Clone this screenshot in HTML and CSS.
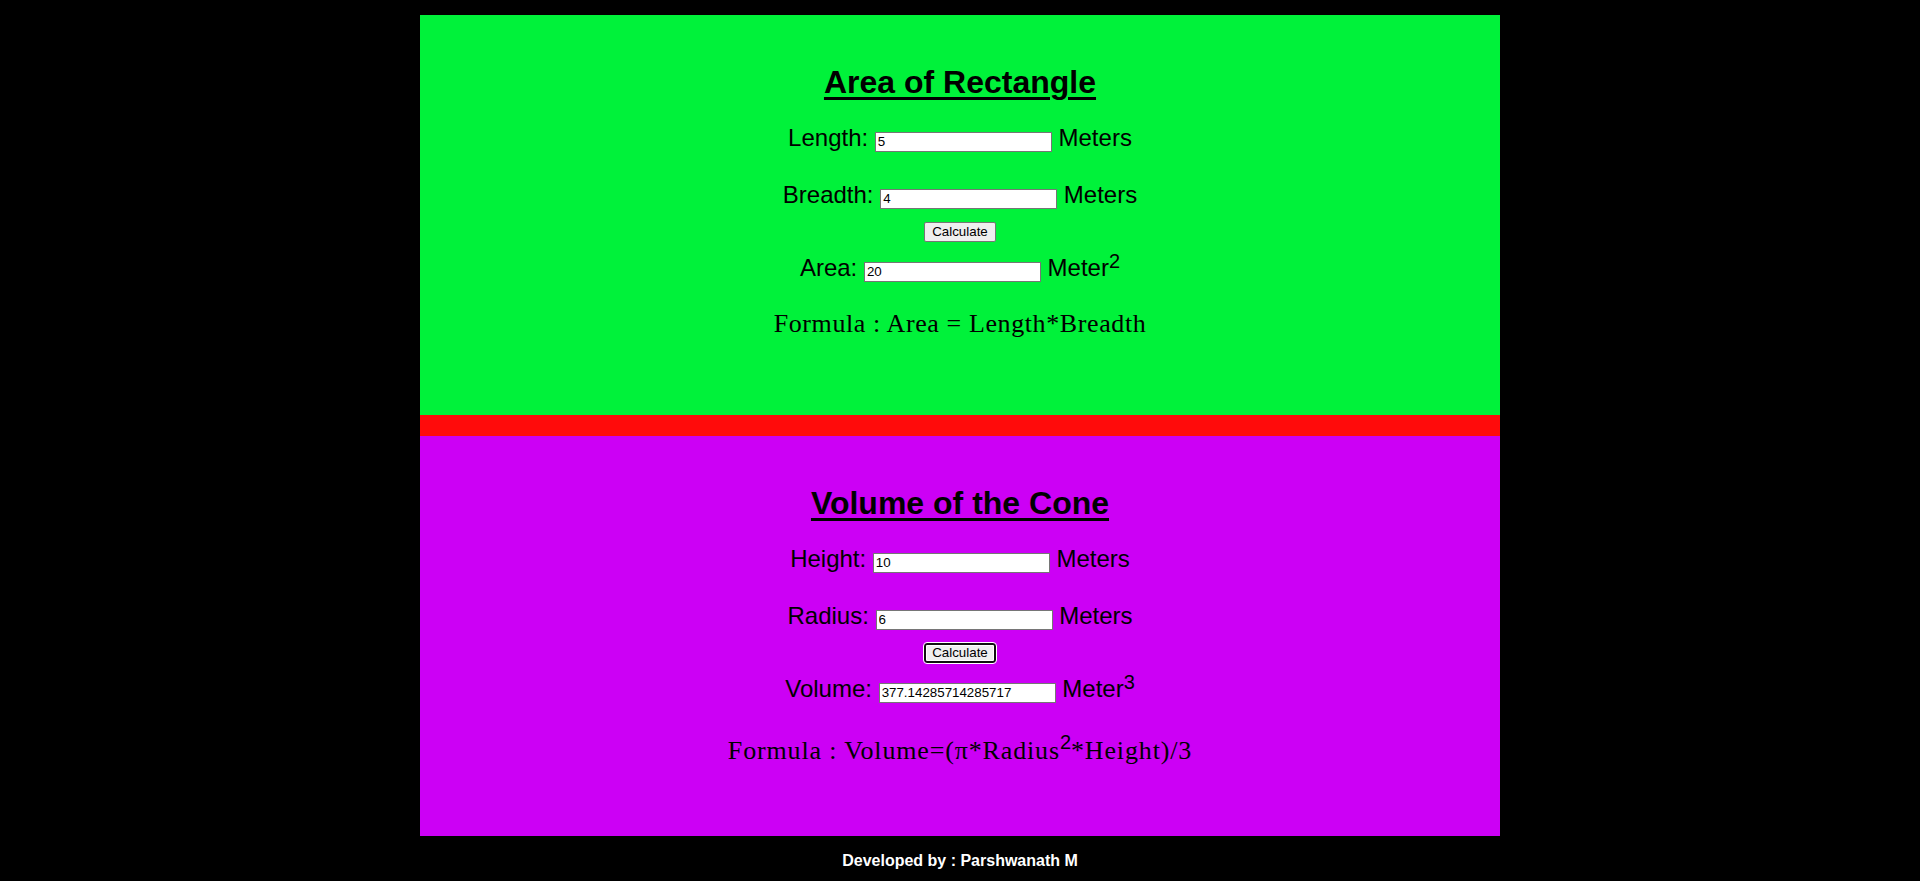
FILE: index.html
```html
<!DOCTYPE html>
<html lang="en">
<head>
<meta charset="utf-8">
<title>Area and Volume Calculator</title>
<link rel="stylesheet" href="styles.css">
</head>
<body>
<main class="page">
  <section class="panel panel-rect">
    <h1 class="title">Area of Rectangle</h1>
    <p class="row row-first">Length: <input class="field" type="text" value="5"> Meters</p>
    <p class="row row-second">Breadth: <input class="field" type="text" value="4"> Meters</p>
    <button class="btn" type="button">Calculate</button>
    <p class="row row-result">Area: <input class="field" type="text" value="20"> Meter<sup class="sup">2</sup></p>
    <p class="formula">Formula : Area = Length*Breadth</p>
  </section>
  <div class="divider"></div>
  <section class="panel panel-cone">
    <h1 class="title">Volume of the Cone</h1>
    <p class="row row-first">Height: <input class="field" type="text" value="10"> Meters</p>
    <p class="row row-second">Radius: <input class="field" type="text" value="6"> Meters</p>
    <button class="btn btn-focus" type="button">Calculate</button>
    <p class="row row-result">Volume: <input class="field" type="text" value="377.14285714285717"> Meter<sup class="sup">3</sup></p>
    <p class="formula formula-tall">Formula : Volume=(π*Radius<sup class="sup">2</sup>*Height)/3</p>
  </section>
</main>
<footer class="footer">Developed by : Parshwanath M</footer>
</body>
</html>
```

FILE: styles.css
```css
html, body {
  margin: 0;
  padding: 0;
  background: #000;
}

body {
  font-family: "Liberation Sans", Arial, sans-serif;
  color: #000;
}

.page {
  padding-top: 15px;
  display: flex;
  flex-direction: column;
  align-items: center;
}

.panel {
  width: 1080px;
  height: 400px;
  box-sizing: border-box;
  padding-top: 49px;
  display: flex;
  flex-direction: column;
  align-items: center;
}

.panel-rect {
  background: #00f23a;
}

.panel-cone {
  background: #cc00f5;
}

.divider {
  width: 1080px;
  height: 21px;
  background: #ff0b0b;
}

.title {
  margin: 0;
  font-size: 32px;
  line-height: 37px;
  font-weight: bold;
  text-decoration: underline;
  text-decoration-thickness: 3px;
  text-underline-offset: 4px;
}

.row {
  margin: 0;
  font-size: 24px;
  line-height: 28px;
  white-space: nowrap;
}

.row-first {
  margin-top: 23px;
}

.row-second {
  margin-top: 29px;
}

.row-result {
  margin-top: 12px;
}

.field {
  box-sizing: border-box;
  width: 177px;
  height: 20px;
  margin: 0;
  padding: 1px 2px;
  border: 1px solid #767676;
  background: #fff;
  color: #000;
  font-family: "Liberation Sans", Arial, sans-serif;
  font-size: 13.333px;
  vertical-align: baseline;
}

.btn {
  box-sizing: border-box;
  width: 72px;
  height: 20px;
  margin: 13px 0 0;
  padding: 0 6px;
  border: 1px solid #767676;
  border-radius: 2px;
  background: #efefef;
  color: #000;
  font-family: "Liberation Sans", Arial, sans-serif;
  font-size: 13.333px;
  line-height: 16px;
}

.btn-focus {
  border: 2px solid #101010;
  border-radius: 3px;
  box-shadow: inset 0 0 0 1px #fff;
  outline: 1px solid #fff;
}

.sup {
  font-size: 20px;
  line-height: 0;
  vertical-align: 8px;
}

.formula {
  margin: 28px 0 0;
  font-family: "Liberation Serif", Georgia, serif;
  font-size: 26px;
  letter-spacing: 0.6px;
  line-height: 28px;
  white-space: nowrap;
}

.formula .sup {
  font-family: "Liberation Sans", Arial, sans-serif;
  letter-spacing: 0;
  vertical-align: 10px;
}

.formula-tall {
  margin-top: 34px;
  letter-spacing: 0.85px;
}

.footer {
  margin-top: 16px;
  color: #fff;
  font-weight: bold;
  font-size: 16px;
  line-height: 18px;
  text-align: center;
}
```
